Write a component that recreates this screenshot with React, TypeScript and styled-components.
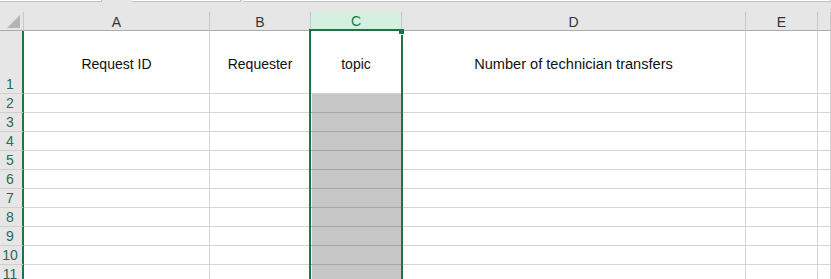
import React from 'react'
import styled, { createGlobalStyle, css } from 'styled-components'

const GlobalStyle = createGlobalStyle`
    body {
        margin: 0;
        background: #fff;
        overflow: hidden;
        font-family: "Liberation Sans", Arial, sans-serif;
    }
`

const GREEN = '#217346'

// F is only partly in view, so its letter is left out
const columns = [
    { key: 'A', label: 'A', width: 186, title: 'Request ID' },
    { key: 'B', label: 'B', width: 101, title: 'Requester' },
    { key: 'C', label: 'C', width: 91, title: 'topic' },
    { key: 'D', label: 'D', width: 344, title: 'Number of technician transfers' },
    { key: 'E', label: 'E', width: 72, title: '' },
    { key: 'F', label: '', width: 0, title: '' },
]
const SELECTED = 'C'
const rowNumbers = [2, 3, 4, 5, 6, 7, 8, 9, 10, 11]

const TopStrip = styled.div`
    height: 12px;
    background: #e6e6e6;
    display: flex;
    align-items: flex-start;
`

const StripBox = styled.div<{ $w?: number; $gap: number }>`
    height: 1px;
    margin-left: ${p => p.$gap}px;
    ${p => (p.$w ? `width: ${p.$w}px;` : 'flex: 1;')}
    background: #fff;
    border-bottom: 1px solid #c3c3c3;
    border-right: 1px solid #c3c3c3;
`

const Sheet = styled.div`
    position: relative;
    display: grid;
    grid-template-columns: 24px ${columns.slice(0, 5).map(c => c.width + 'px').join(' ')} 1fr;
    grid-template-rows: 19px 63px repeat(${rowNumbers.length}, 19px);
    font-size: 14px;
`

const Corner = styled.div`
    background: #e6e6e6;
    border-right: 1px solid #c8c8c8;
    border-bottom: 1px solid #ababab;
    box-sizing: border-box;
    display: flex;
    align-items: flex-end;
    justify-content: flex-end;
    padding: 0 3px 2px 0;
`

const ColHeader = styled.div<{ $selected?: boolean }>`
    box-sizing: border-box;
    background: #e6e6e6;
    color: #333;
    border-right: 1px solid #c8c8c8;
    border-bottom: 1px solid #ababab;
    display: flex;
    align-items: center;
    justify-content: center;
    padding-top: 1px;
    ${p => p.$selected && css`
        background: #d3f0e0;
        color: ${GREEN};
        border-bottom: 2px solid ${GREEN};
    `}
`

const RowHeader = styled.div`
    box-sizing: border-box;
    background: #e6e6e6;
    color: #2a6a52;
    border-right: 2px solid ${GREEN};
    border-bottom: 1px solid #cfcfcf;
    display: flex;
    align-items: flex-end;
    justify-content: center;
    padding: 0 2px 0 0;
    line-height: 17px;
`

const Cell = styled.div<{ $filled?: boolean }>`
    box-sizing: border-box;
    border-right: 1px solid #d4d4d4;
    border-bottom: 1px solid #d4d4d4;
    display: flex;
    align-items: center;
    justify-content: center;
    color: #111;
    padding-top: 3px;
    white-space: nowrap;
    ${p => p.$filled && css`
        background: #c6c6c6;
        border-bottom-color: #a6a6a6;
        box-shadow: inset 1px 0 0 #fff;
    `}
`

const Title = styled.span<{ $wide?: boolean }>`
    font-size: ${p => (p.$wide ? '14.6px' : '14px')};
`

const Selection = styled.div`
    position: absolute;
    left: 309px;
    top: 17px;
    width: 94px;
    bottom: 0;
    box-sizing: border-box;
    border: 2px solid ${GREEN};
    border-bottom: none;
    pointer-events: none;
`

const FillHandle = styled.div`
    position: absolute;
    left: 399px;
    top: 17px;
    width: 5px;
    height: 5px;
    background: ${GREEN};
    border-bottom: 1px solid #fff;
`

const CornerMark = () => (
    <svg width="13" height="13" viewBox="0 0 13 13">
        <polygon points="13,0 13,13 0,13" fill="#b4b4b4" />
    </svg>
)

export default function App() {
    return (
        <>
            <GlobalStyle />
            <TopStrip>
                <StripBox $w={101} $gap={0} />
                <StripBox $w={108} $gap={30} />
                <StripBox $gap={3} />
            </TopStrip>
            <Sheet>
                <Corner>
                    <CornerMark />
                </Corner>
                {columns.map(c => (
                    <ColHeader key={c.key} $selected={c.key === SELECTED}>
                        {c.label}
                    </ColHeader>
                ))}

                <RowHeader>1</RowHeader>
                {columns.map(c => (
                    <Cell key={c.key}>
                        {c.title && <Title $wide={c.title.length > 20}>{c.title}</Title>}
                    </Cell>
                ))}

                {rowNumbers.map(n => (
                    <React.Fragment key={n}>
                        <RowHeader>{n}</RowHeader>
                        {columns.map(c => (
                            <Cell key={c.key} $filled={c.key === SELECTED} />
                        ))}
                    </React.Fragment>
                ))}

                <Selection />
                <FillHandle />
            </Sheet>
        </>
    )
}
